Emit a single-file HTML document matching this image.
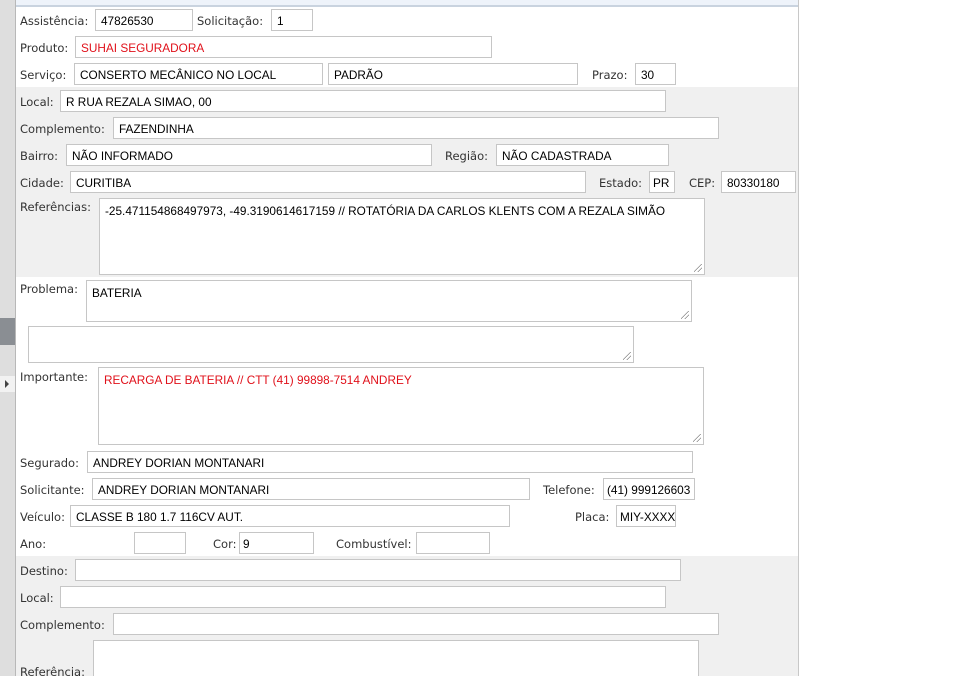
<!DOCTYPE html>
<html><head><meta charset="utf-8"><style>
html,body{margin:0;width:960px;height:676px;overflow:hidden;}
body{background:#fff;position:relative;font-family:"DejaVu Sans","Liberation Sans",sans-serif;}
.side{position:absolute;left:0;top:0;width:15px;height:676px;background:#dedede;border-right:1px solid #b8b8b8;}
.top{position:absolute;left:16px;top:0;width:782px;height:5px;background:#eef3fa;border-bottom:2px solid #c9d3df;}
.rb{position:absolute;left:798px;top:0;width:1px;height:676px;background:#c8c8c8;}
.g{position:absolute;left:16px;width:782px;background:#f0f0f0;}
.l{position:absolute;font-size:11.5px;color:#333;line-height:14px;white-space:nowrap;margin-top:1px;}
.i{position:absolute;box-sizing:border-box;height:22px;border:1px solid #c6c6c6;background:#fff;font-family:"Liberation Sans",sans-serif;font-size:11.8px;color:#000;padding:5px 0 0 5px;white-space:nowrap;overflow:hidden;line-height:13px;}
.t{height:auto;padding-top:6px;}
.r{color:#e0101a;}
.t:after{content:"";position:absolute;right:2px;bottom:2px;width:8px;height:8px;background:linear-gradient(135deg,transparent 45%,#888 45%,#888 52%,transparent 52%,transparent 70%,#888 70%,#888 77%,transparent 77%);}
</style></head><body>
<div class="side"></div>
<div style="position:absolute;left:0;top:318px;width:15px;height:27px;background:#8a8e93;"></div>
<div style="position:absolute;left:0;top:376px;width:15px;height:16px;background:#f2f2f2;"></div>
<div style="position:absolute;left:5px;top:380px;width:0;height:0;border-left:4px solid #444;border-top:4px solid transparent;border-bottom:4px solid transparent;"></div>
<div class="top"></div>
<div class="g" style="top:87px;height:190px"></div>
<div class="g" style="top:556px;height:120px"></div>
<div class="rb"></div>

<div class="l" style="left:20px;top:13px">Assistência:</div><div class="i" style="left:95px;top:9px;width:98px">47826530</div>
<div class="l" style="left:197px;top:13px">Solicitação:</div><div class="i" style="left:271px;top:9px;width:42px">1</div>
<div class="l" style="left:20px;top:40px">Produto:</div><div class="i r" style="left:75px;top:36px;width:417px">SUHAI SEGURADORA</div>
<div class="l" style="left:20px;top:67px">Serviço:</div><div class="i" style="left:74px;top:63px;width:249px">CONSERTO MECÂNICO NO LOCAL</div>
<div class="i" style="left:328px;top:63px;width:250px">PADRÃO</div>
<div class="l" style="left:592px;top:67px">Prazo:</div><div class="i" style="left:635px;top:63px;width:41px">30</div>

<div class="l" style="left:20px;top:94px">Local:</div><div class="i" style="left:60px;top:90px;width:606px">R RUA REZALA SIMAO, 00</div>
<div class="l" style="left:20px;top:121px">Complemento:</div><div class="i" style="left:113px;top:117px;width:606px">FAZENDINHA</div>
<div class="l" style="left:20px;top:148px">Bairro:</div><div class="i" style="left:66px;top:144px;width:366px">NÃO INFORMADO</div>
<div class="l" style="left:445px;top:148px">Região:</div><div class="i" style="left:496px;top:144px;width:173px">NÃO CADASTRADA</div>
<div class="l" style="left:20px;top:175px">Cidade:</div><div class="i" style="left:70px;top:171px;width:516px">CURITIBA</div>
<div class="l" style="left:599px;top:175px">Estado:</div><div class="i" style="left:649px;top:171px;width:26px;padding-left:3px">PR</div>
<div class="l" style="left:689px;top:175px">CEP:</div><div class="i" style="left:721px;top:171px;width:75px">80330180</div>
<div class="l" style="left:20px;top:199px">Referências:</div><div class="i t" style="left:99px;top:198px;width:606px;height:77px">-25.471154868497973, -49.3190614617159 // ROTATÓRIA DA CARLOS KLENTS COM A REZALA SIMÃO</div>

<div class="l" style="left:20px;top:281px">Problema:</div><div class="i t" style="left:86px;top:280px;width:606px;height:42px">BATERIA</div>
<div class="i t" style="left:28px;top:326px;width:606px;height:37px"></div>
<div class="l" style="left:20px;top:369px">Importante:</div><div class="i t r" style="left:98px;top:367px;width:606px;height:78px">RECARGA DE BATERIA // CTT (41) 99898-7514 ANDREY</div>
<div class="l" style="left:20px;top:455px">Segurado:</div><div class="i" style="left:87px;top:451px;width:606px">ANDREY DORIAN MONTANARI</div>
<div class="l" style="left:20px;top:482px">Solicitante:</div><div class="i" style="left:92px;top:478px;width:438px">ANDREY DORIAN MONTANARI</div>
<div class="l" style="left:543px;top:482px">Telefone:</div><div class="i" style="left:603px;top:478px;width:92px;padding-left:3px">(41) 999126603</div>
<div class="l" style="left:20px;top:509px">Veículo:</div><div class="i" style="left:70px;top:505px;width:440px">CLASSE B 180 1.7 116CV AUT.</div>
<div class="l" style="left:575px;top:509px">Placa:</div><div class="i" style="left:616px;top:505px;width:60px;padding-left:3px">MIY-XXXX</div>
<div class="l" style="left:20px;top:536px">Ano:</div><div class="i" style="left:134px;top:532px;width:52px"></div>
<div class="l" style="left:213px;top:536px">Cor:</div><div class="i" style="left:239px;top:532px;width:75px;padding-left:3px">9</div>
<div class="l" style="left:336px;top:536px">Combustível:</div><div class="i" style="left:416px;top:532px;width:74px"></div>

<div class="l" style="left:20px;top:563px">Destino:</div><div class="i" style="left:75px;top:559px;width:606px"></div>
<div class="l" style="left:20px;top:590px">Local:</div><div class="i" style="left:60px;top:586px;width:606px"></div>
<div class="l" style="left:20px;top:617px">Complemento:</div><div class="i" style="left:113px;top:613px;width:606px"></div>
<div class="l" style="left:20px;top:664px">Referência:</div><div class="i" style="left:93px;top:640px;width:606px;height:50px"></div>
</body></html>
